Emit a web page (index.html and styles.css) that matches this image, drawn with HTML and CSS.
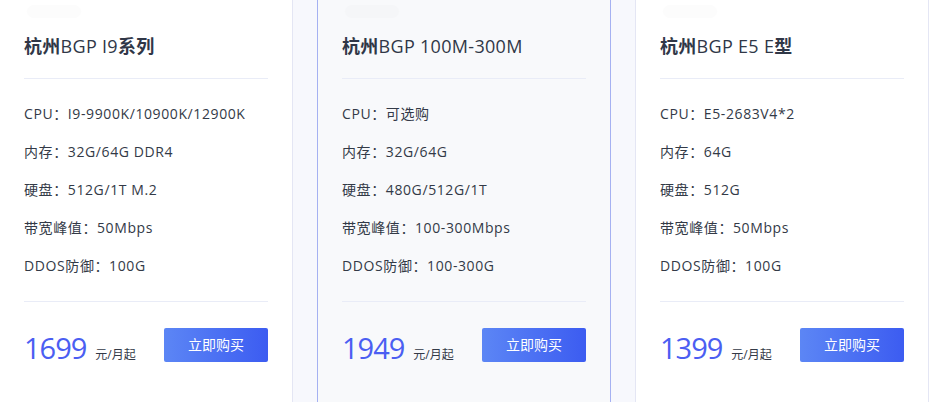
FILE: index.html
```html
<!DOCTYPE html>
<html lang="zh-CN">
<head>
<meta charset="utf-8">
<title>杭州BGP</title>
<link rel="stylesheet" href="styles.css">
</head>
<body>
<div class="plans">
  <div class="card">
    <div class="pill"></div>
    <h3 class="title"><b>杭州</b>BGP I9<b>系列</b></h3>
    <ul class="specs">
      <li>CPU：I9-9900K/10900K/12900K</li>
      <li>内存：32G/64G DDR4</li>
      <li>硬盘：512G/1T M.2</li>
      <li>带宽峰值：50Mbps</li>
      <li>DDOS防御：100G</li>
    </ul>
    <div class="foot">
      <div class="price"><span class="num">1699</span><span class="unit">元/月起</span></div>
      <a class="buy">立即购买</a>
    </div>
  </div>
  <div class="card active">
    <div class="pill"></div>
    <h3 class="title"><b>杭州</b>BGP 100M-300M</h3>
    <ul class="specs">
      <li>CPU：可选购</li>
      <li>内存：32G/64G</li>
      <li>硬盘：480G/512G/1T</li>
      <li>带宽峰值：100-300Mbps</li>
      <li>DDOS防御：100-300G</li>
    </ul>
    <div class="foot">
      <div class="price"><span class="num">1949</span><span class="unit">元/月起</span></div>
      <a class="buy">立即购买</a>
    </div>
  </div>
  <div class="card">
    <div class="pill"></div>
    <h3 class="title"><b>杭州</b>BGP E5 E<b>型</b></h3>
    <ul class="specs">
      <li>CPU：E5-2683V4*2</li>
      <li>内存：64G</li>
      <li>硬盘：512G</li>
      <li>带宽峰值：50Mbps</li>
      <li>DDOS防御：100G</li>
    </ul>
    <div class="foot">
      <div class="price"><span class="num">1399</span><span class="unit">元/月起</span></div>
      <a class="buy">立即购买</a>
    </div>
  </div>
</div>
</body>
</html>
```
FILE: styles.css
```css
html, body {
  margin: 0;
  padding: 0;
  background: #f7f8fd;
  overflow: hidden;
}
body {
  font-family: "Open Sans", "Noto Sans CJK SC", sans-serif;
  color: #333a47;
}
.plans {
  display: flex;
  gap: 24px;
  margin-left: -1px;
}
.card {
  box-sizing: border-box;
  width: 294px;
  height: 430px;
  flex: none;
  background: #fff;
  border: 1px solid #e4e6f4;
  border-top: none;
  padding: 0 24px;
}
.card.active {
  background: #f8f9fb;
  border-color: #a5b1f2;
}
.pill {
  margin-top: 5px;
  width: 54px;
  height: 13px;
  margin-left: 3px;
  border-radius: 7px;
  background: #fcfcfc;
}
.active .pill {
  background: #f5f6f8;
}
.title {
  margin: 15px 0 0;
  height: 27px;
  line-height: 27px;
  font-size: 18px;
  font-weight: 400;
  letter-spacing: 0.3px;
  color: #303747;
  padding-bottom: 18px;
  border-bottom: 1px solid #e9ecf7;
}
.title b {
  font-weight: 700;
}
.specs {
  list-style: none;
  margin: 0;
  padding: 16px 0 16px;
  border-bottom: 1px solid #e9ecf7;
}
.specs li {
  height: 38px;
  line-height: 38px;
  font-size: 14px;
  letter-spacing: 0.6px;
  color: #333a47;
}
.foot {
  display: flex;
  justify-content: space-between;
  align-items: flex-end;
  margin-top: 26px;
}
.price {
  display: flex;
  align-items: baseline;
  height: 34px;
  margin-bottom: -3px;
}
.num {
  font-size: 29px;
  line-height: 34px;
  letter-spacing: -1px;
  color: #4b5ef2;
}
.unit {
  font-size: 12px;
  color: #333a47;
  margin-left: 9px;
}
.buy {
  display: block;
  width: 104px;
  height: 34px;
  line-height: 34px;
  text-align: center;
  font-size: 14px;
  color: #fff;
  border-radius: 2px;
  background: linear-gradient(90deg, #5c86f5, #3c5cf1);
}
```
